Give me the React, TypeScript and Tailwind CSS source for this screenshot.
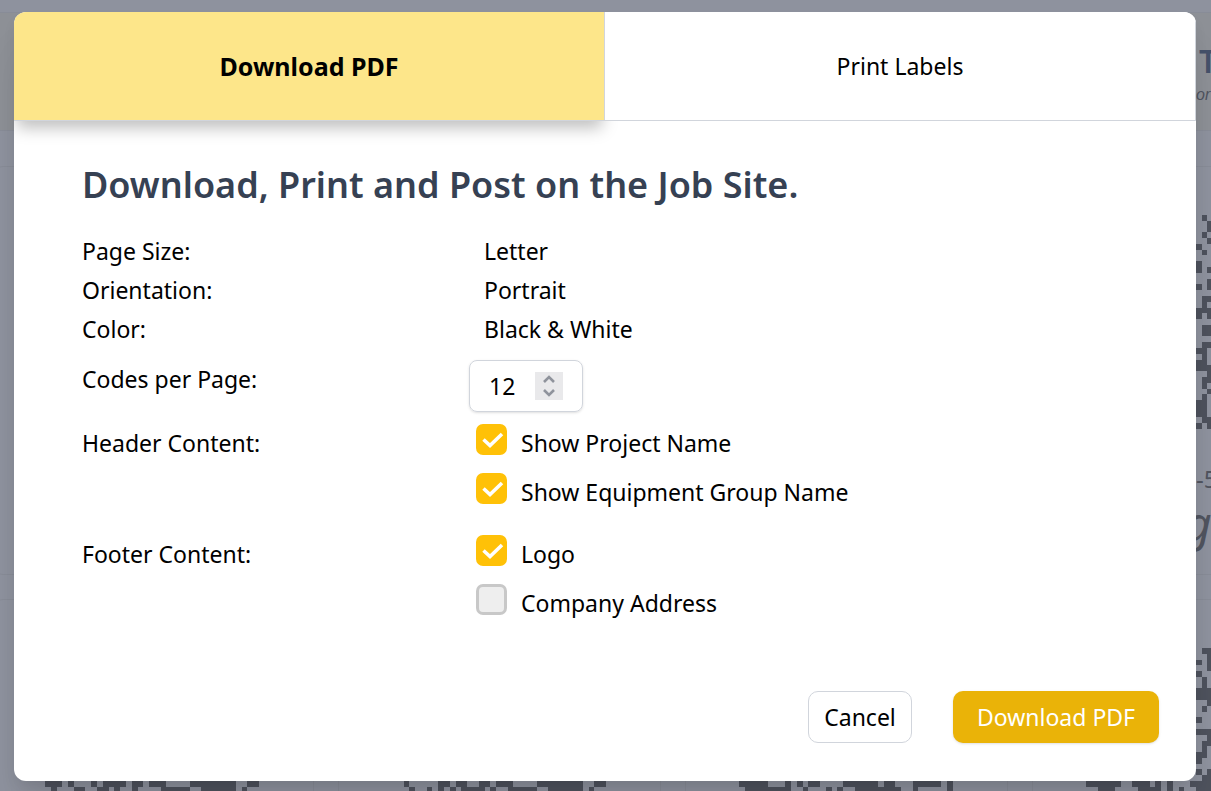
import React, { useState } from 'react';

type Run = [row: number, col: number, length: number];

const QR_CODES: Run[][] = [
  [
    [23, 0, 3], [23, 4, 1], [23, 8, 1], [23, 10, 4], [23, 15, 2], [23, 18, 3], [23, 25, 8], [23, 35, 2],
    [24, 1, 1], [24, 5, 2], [24, 9, 2], [24, 12, 1], [24, 15, 1], [24, 20, 5], [24, 27, 6], [24, 34, 1],
  ],
  [
    [23, 2, 1], [23, 8, 2], [23, 11, 2], [23, 15, 2], [23, 18, 3], [23, 25, 8], [23, 35, 2],
    [24, 3, 1], [24, 6, 1], [24, 8, 1], [24, 10, 1], [24, 12, 4], [24, 17, 1], [24, 20, 5], [24, 27, 6], [24, 34, 1],
  ],
  [
    [23, 0, 5], [23, 8, 1], [23, 10, 1], [23, 12, 2], [23, 18, 6], [23, 25, 2], [23, 30, 5], [23, 36, 1],
    [24, 1, 8], [24, 11, 1], [24, 15, 1], [24, 17, 1], [24, 20, 8], [24, 30, 1], [24, 36, 1],
  ],
  [
    [0, 20, 2], [1, 21, 1], [2, 19, 1], [2, 21, 1], [3, 21, 1], [4, 19, 1], [5, 20, 1], [6, 20, 1],
    [7, 19, 3], [8, 19, 3], [9, 21, 1], [10, 20, 1], [12, 19, 1], [14, 19, 3], [15, 21, 1], [16, 20, 2],
    [17, 20, 1], [18, 19, 2], [19, 19, 1], [21, 19, 1], [21, 21, 1], [22, 20, 2],
    [23, 0, 6], [23, 8, 3], [23, 12, 1], [23, 14, 1], [23, 18, 4],
    [24, 2, 3], [24, 9, 4], [24, 14, 1], [24, 16, 1], [24, 19, 3],
  ],
];

const FIRST_ROW_CODE: Run[] = [
  [0, 20, 1], [1, 21, 1], [2, 21, 1], [3, 20, 1], [4, 21, 1], [5, 19, 1], [6, 20, 1], [8, 19, 1],
  [9, 19, 1], [9, 21, 1], [11, 21, 1], [12, 19, 1], [12, 21, 1], [14, 20, 2], [15, 20, 1], [16, 19, 3],
  [17, 19, 1], [17, 21, 1], [19, 20, 2], [20, 20, 2], [22, 20, 2], [23, 19, 2], [24, 20, 1], [25, 19, 2],
  [26, 19, 3], [27, 21, 1], [28, 20, 2], [29, 20, 1], [30, 21, 1], [31, 20, 1], [32, 19, 2], [33, 19, 2],
  [34, 19, 2], [35, 20, 2], [36, 19, 1], [36, 21, 1],
];

const QrCode = ({ runs }: { runs: Run[] }) => (
  <svg viewBox="0 0 37 37" className="w-[214px] h-[214px] shrink-0" shapeRendering="crispEdges" fill="#4e525d">
    {runs.map(([row, col, length]) => (
      <rect key={`${row}-${col}`} x={col} y={row} width={length} height={1} />
    ))}
  </svg>
);

const Card = ({ children }: { children?: React.ReactNode }) => (
  <div className="h-[409px] rounded-xl border border-[#888c97] px-[53px] pt-12">{children}</div>
);

const Backdrop = () => (
  <div aria-hidden="true" className="absolute inset-0 overflow-hidden bg-[#8e929e] text-[#50545f]">
    <div className="mt-3 -ml-[9px] grid h-[119px] w-max grid-cols-[repeat(4,323px)] gap-6 border-y border-[#888c97] bg-[#8d9096]">
      <div className="col-start-4 overflow-hidden whitespace-nowrap pt-7 pl-[167px]">
        <p className="text-[32px] leading-10 font-semibold text-[#45516a]">T</p>
        <p className="-ml-[3px] font-['Liberation_Sans',sans-serif] text-base leading-7 italic">or</p>
      </div>
    </div>
    <div className="mt-[35px] -ml-[9px] grid w-max grid-cols-[repeat(4,323px)] gap-6">
      <Card />
      <Card />
      <Card />
      <Card>
        <QrCode runs={FIRST_ROW_CODE} />
        <div className="pl-[110px] pt-[34px] whitespace-nowrap">
          <p className="text-2xl leading-8">-5</p>
          <p className="-ml-3 text-5xl leading-[56px] italic">g</p>
        </div>
      </Card>
      {QR_CODES.map((runs, i) => (
        <Card key={i}>
          <QrCode runs={runs} />
        </Card>
      ))}
    </div>
  </div>
);

interface CheckboxProps {
  label: string;
  checked: boolean;
  onChange: (checked: boolean) => void;
}

const Checkbox = ({ label, checked, onChange }: CheckboxProps) => (
  <label className="flex items-start gap-[14px] cursor-pointer">
    <span className="grid shrink-0">
      <input
        type="checkbox"
        checked={checked}
        onChange={e => onChange(e.target.checked)}
        className="col-start-1 row-start-1 size-[31px] appearance-none rounded-[7px] border-3 border-[#c8c8c8] bg-[#eeeeee] checked:border-[#ffc107] checked:bg-[#ffc107]"
      />
      {checked && (
        <svg
          viewBox="0 0 31 31"
          className="pointer-events-none col-start-1 row-start-1 size-[31px]"
          fill="none"
          stroke="#fff"
          strokeWidth="3.6"
        >
          <path d="M7.5 15.5 L14 21.5 L26 10" />
        </svg>
      )}
    </span>
    <span>{label}</span>
  </label>
);

const App = () => {
  const [tab, setTab] = useState('pdf');
  const [codes, setCodes] = useState(12);
  const [projectName, setProjectName] = useState(true);
  const [groupName, setGroupName] = useState(true);
  const [logo, setLogo] = useState(true);
  const [address, setAddress] = useState(false);

  const tabClass = (active: boolean) =>
    active
      ? 'flex-1 border-r border-b border-gray-300 bg-[#fde68a] text-[25px] font-bold shadow-[0_10px_15px_-3px_rgba(0,0,0,0.25)]'
      : 'relative z-10 flex-1 border-r border-b border-gray-300 bg-white';

  return (
    <div className="relative flex min-h-screen flex-col pt-3 pr-[15px] pb-[10px] pl-[14px] font-['Noto_Sans',sans-serif] text-[23px] leading-[39px] text-black">
      <Backdrop />
      <div
        role="dialog"
        aria-label="Download or print codes"
        className="relative flex flex-1 flex-col overflow-hidden rounded-xl bg-white shadow-[0_32px_40px_-8px_rgba(0,0,0,0.1),0_8px_16px_-4px_rgba(0,0,0,0.1)]"
      >
        <div className="flex h-[109px]">
          <button type="button" onClick={() => setTab('pdf')} className={tabClass(tab === 'pdf')}>
            Download PDF
          </button>
          <button type="button" onClick={() => setTab('labels')} className={tabClass(tab === 'labels')}>
            Print Labels
          </button>
        </div>

        <form className="flex flex-1 flex-col pt-10 pr-[37px] pb-[38px] pl-[68px]" onSubmit={e => e.preventDefault()}>
          <h1 className="text-4xl leading-12 font-[650] text-gray-700">
            Download, Print and Post on the Job Site.
          </h1>

          <dl className="mt-[23px] grid grid-cols-[402px_1fr]">
            <dt>Page Size:</dt>
            <dd>Letter</dd>
            <dt>Orientation:</dt>
            <dd>Portrait</dd>
            <dt>Color:</dt>
            <dd>Black &amp; White</dd>
          </dl>

          <div className="mt-[11px] grid grid-cols-[387px_1fr]">
            <label htmlFor="codes">Codes per Page:</label>
            <div className="flex h-[52px] w-[114px] items-center rounded-lg border border-gray-300 pl-[19px] shadow-sm">
              <input
                id="codes"
                type="text"
                inputMode="numeric"
                value={codes}
                onChange={e => setCodes(Number(e.target.value) || 0)}
                className="w-[46px] bg-transparent outline-none"
              />
              <div className="flex h-7 w-7 flex-col bg-[#e9e9eb] text-[#8f939c]">
                <button type="button" aria-label="More codes" onClick={() => setCodes(codes + 1)} className="flex h-[14px] items-center justify-center">
                  <svg viewBox="0 0 12 8" className="h-2 w-3" fill="none" stroke="currentColor" strokeWidth="2.6">
                    <path d="M1 7 L6 2 L11 7" />
                  </svg>
                </button>
                <button type="button" aria-label="Fewer codes" onClick={() => setCodes(codes - 1)} className="flex h-[14px] items-center justify-center">
                  <svg viewBox="0 0 12 8" className="h-2 w-3" fill="none" stroke="currentColor" strokeWidth="2.6">
                    <path d="M1 1 L6 6 L11 1" />
                  </svg>
                </button>
              </div>
            </div>
          </div>

          <fieldset className="mt-3 grid grid-cols-[394px_1fr]">
            <div>Header Content:</div>
            <div className="flex flex-col gap-[10px]">
              <Checkbox label="Show Project Name" checked={projectName} onChange={setProjectName} />
              <Checkbox label="Show Equipment Group Name" checked={groupName} onChange={setGroupName} />
            </div>
          </fieldset>

          <fieldset className="mt-[23px] grid grid-cols-[394px_1fr]">
            <div>Footer Content:</div>
            <div className="flex flex-col gap-[10px]">
              <Checkbox label="Logo" checked={logo} onChange={setLogo} />
              <Checkbox label="Company Address" checked={address} onChange={setAddress} />
            </div>
          </fieldset>

          <div className="mt-auto flex justify-end gap-[41px]">
            <button type="button" className="h-[52px] w-[104px] rounded-[10px] border border-gray-300 bg-white">
              Cancel
            </button>
            <button type="submit" className="h-[52px] w-[206px] rounded-[10px] bg-[#eab308] text-white shadow-sm">
              Download PDF
            </button>
          </div>
        </form>
      </div>
    </div>
  );
};

export default App;
